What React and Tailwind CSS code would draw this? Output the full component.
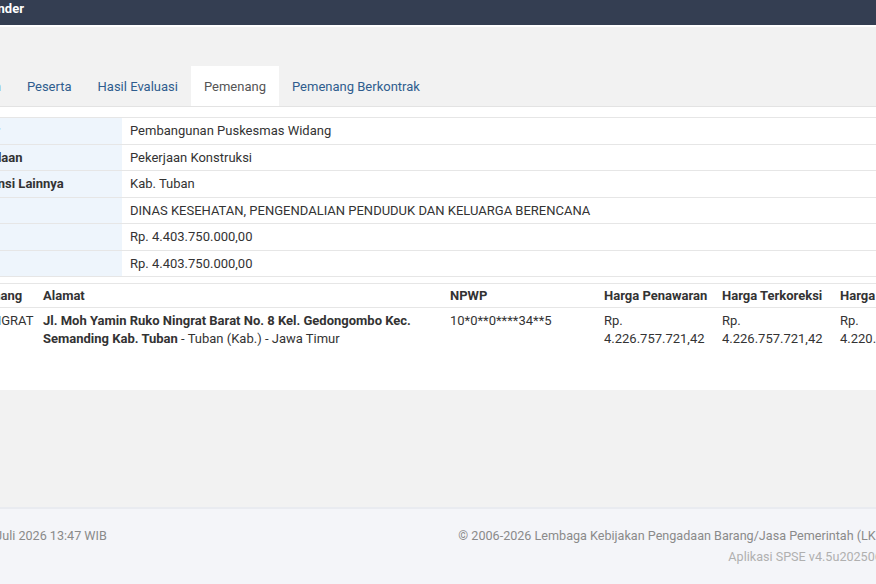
import React from "react";

const rows = [
  ["Nama Tender", "Pembangunan Puskesmas Widang"],
  ["Jenis Pengadaan", "Pekerjaan Konstruksi"],
  ["K/L/PD/Instansi Lainnya", "Kab. Tuban"],
  ["Satuan Kerja", "DINAS KESEHATAN, PENGENDALIAN PENDUDUK DAN KELUARGA BERENCANA"],
  ["Pagu", "Rp. 4.403.750.000,00"],
  ["HPS", "Rp. 4.403.750.000,00"],
];

const tabs = ["Pengumuman", "Peserta", "Hasil Evaluasi", "Pemenang", "Pemenang Berkontrak"];

const cols = "grid grid-cols-[121px_407px_154px_118px_118px_1fr]";

export default function App() {
  return (
    <div className="w-[876px] h-[584px] overflow-hidden bg-[#f2f2f2] font-['Roboto',sans-serif] text-[13px] text-[#333]">
      <div className="ml-[-120px] w-[1040px]">
        <div className="h-[24px] bg-[#343e52] flex items-start pt-[1px] pl-[44px] border-b-2 border-white box-content">
          <span className="text-white font-bold text-[13px] leading-[16px]">Informasi Tender</span>
        </div>
        <div className="pt-[39px]">
          <div className="flex pl-[27px] border-b border-[#e3e3e3]">
            {tabs.map((t) => (
              <div
                key={t}
                className={
                  "h-[40px] px-[13px] pt-[1px] flex items-center " +
                  (t === "Pemenang" ? "bg-white text-[#555]" : "text-[#2f5d8e]")
                }
              >
                {t}
              </div>
            ))}
          </div>
          <div className="bg-white pt-[10px] pb-[36px] pl-[34px]">
            <div className="border-t border-[#e6e6e6]">
              {rows.map(([k, v]) => (
                <div key={k} className="grid grid-cols-[208px_1fr] h-[26.5px] border-b border-[#e6e6e6]">
                  <div className="bg-[#eef5fc] flex items-center px-[8px] font-bold whitespace-nowrap">{k}</div>
                  <div className="flex items-center px-[8px]">{v}</div>
                </div>
              ))}
            </div>
            <div className="mt-[6px] border-t border-[#e6e6e6]">
              <div className={cols + " h-[24px] border-b border-[#e6e6e6] font-bold items-center whitespace-nowrap"}>
                <div className="px-[8px]">Nama Pemenang</div>
                <div className="px-[8px]">Alamat</div>
                <div className="px-[8px]">NPWP</div>
                <div className="px-[8px]">Harga Penawaran</div>
                <div className="px-[8px]">Harga Terkoreksi</div>
                <div className="px-[8px]">Harga Negosiasi</div>
              </div>
              <div className={cols + " pt-[4px] pb-[6px] leading-[18px]"}>
                <div className="px-[8px] whitespace-nowrap">CV. ARYA NINGRAT</div>
                <div className="px-[8px]">
                  <b>Jl. Moh Yamin Ruko Ningrat Barat No. 8 Kel. Gedongombo Kec. Semanding Kab. Tuban</b> - Tuban (Kab.) - Jawa Timur
                </div>
                <div className="px-[8px]">10*0**0****34**5</div>
                <div className="px-[8px]">Rp. 4.226.757.721,42</div>
                <div className="px-[8px]">Rp. 4.226.757.721,42</div>
                <div className="px-[8px] w-[118px]">Rp. 4.220.412.500,00</div>
              </div>
            </div>
          </div>
          <div className="h-[117px]" />
          <div className="border-t-2 border-[#e9ebf0] bg-[#f4f5f9] h-[120px] pt-[17px] px-[24px] text-[12.6px]">
            <div className="flex justify-between leading-[20px]">
              <span className="text-[#8a8a8a] pl-[31px] whitespace-nowrap">Selasa, 14 Juli 2026 13:47 WIB</span>
              <div className="text-right whitespace-nowrap">
                <div className="text-[#8a8a8a]">© 2006-2026 Lembaga Kebijakan Pengadaan Barang/Jasa Pemerintah (LKPP)</div>
                <div className="text-[#b0b0b0] mt-[1px]">Aplikasi SPSE v4.5u20250617</div>
              </div>
            </div>
          </div>
        </div>
      </div>
    </div>
  );
}
